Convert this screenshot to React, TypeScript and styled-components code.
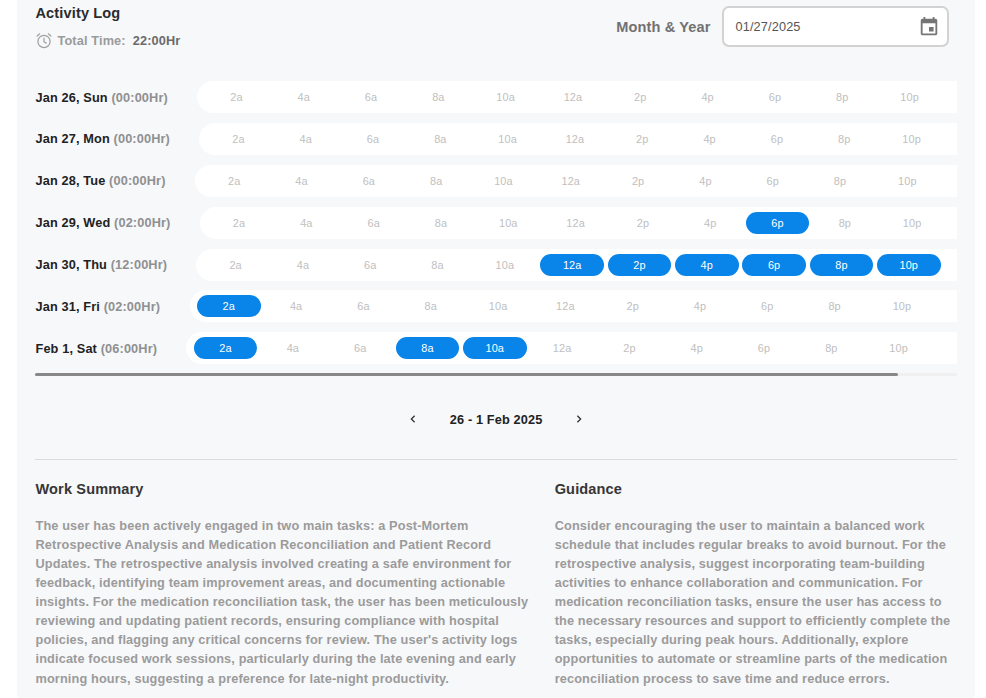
import React from "react";
import styled, { createGlobalStyle } from "styled-components";

const GlobalStyle = createGlobalStyle`
  *, *::before, *::after { box-sizing: border-box; }
  body {
    margin: 0;
    background: #fff;
    font-family: "Liberation Sans", Arial, Helvetica, sans-serif;
    letter-spacing: 0.135px;
  }
  h2, p { margin: 0; }
`;

const Panel = styled.main`
  width: 957.5px;
  height: 698px;
  margin-left: 17.3px;
  padding: 0 18px 0 18.2px;
  overflow: hidden;
  background: #f7f8fa;
`;

const Header = styled.header`
  display: flex;
  justify-content: space-between;
  height: 81px;
`;

const HeaderInfo = styled.div`
  display: flex;
  flex-direction: column;
  padding-top: 2px;
`;

const Heading = styled.h2<{ $color?: string }>`
  font-size: 14.56px;
  font-weight: 700;
  line-height: 22px;
  color: ${(p) => p.$color ?? "#2c2c2c"};
`;

const TotalTime = styled.div`
  display: flex;
  align-items: center;
  height: 20px;
  margin-top: 6px;
  font-size: 12.74px;
  font-weight: 700;
  color: #9a9b9c;
`;

const TotalLabel = styled.span`
  margin: 0 7px 0 4px;
`;

const TotalValue = styled.span`
  color: #6b6b6b;
`;

const DatePicker = styled.label`
  display: flex;
  align-items: center;
  gap: 11.4px;
  height: 41px;
  margin: 6px 7.8px 0 0;
  font-size: 14.56px;
  font-weight: 700;
  color: #717171;
`;

const DateField = styled.span`
  display: flex;
  align-items: center;
  justify-content: space-between;
  width: 227px;
  height: 41px;
  padding: 0 7.5px 0 11.5px;
  border: 2px solid #d2d2d2;
  border-radius: 7px;
  background: #fff;
  font-size: 12.74px;
  font-weight: 400;
  color: #555;
`;

const Days = styled.section`
  display: flex;
  flex-direction: column;
  gap: 9.9px;
`;

const DayRow = styled.div`
  display: flex;
  align-items: center;
  height: 32px;
`;

const DayLabel = styled.div<{ $width: number }>`
  flex: 0 0 ${(p) => p.$width}px;
  font-size: 12.74px;
  font-weight: 700;
  white-space: nowrap;
  color: #222;
`;

const Hours = styled.span`
  color: #8f9091;
`;

const Track = styled.div`
  display: flex;
  flex: 1;
  align-items: center;
  gap: 3.64px;
  height: 32px;
  padding-left: 7.3px;
  border-radius: 16px 0 0 16px;
  background: #fff;
`;

const Slot = styled.div<{ $active: boolean }>`
  flex: 0 0 63.7px;
  height: 22px;
  border-radius: 11px;
  line-height: 22px;
  font-size: 10.92px;
  text-align: center;
  background: ${(p) => (p.$active ? "#0984e8" : "transparent")};
  color: ${(p) => (p.$active ? "#fff" : "#c0c0c0")};
`;

const ScrollTrack = styled.div`
  height: 3px;
  margin-top: 8.4px;
  background: #f0f0f0;
`;

const ScrollThumb = styled.div`
  width: 862.4px;
  height: 3px;
  border-radius: 1.5px;
  background: #888;
`;

const Pager = styled.nav`
  display: flex;
  align-items: center;
  justify-content: center;
  gap: 32.5px;
  height: 84.4px;
  padding-top: 4px;
  border-bottom: 1px solid #dadcde;
  font-size: 12.74px;
  font-weight: 700;
  color: #222;
`;

const Columns = styled.div`
  display: grid;
  grid-template-columns: 519.2px 1fr;
  padding-top: 17.4px;
`;

const Paragraph = styled.p`
  margin-top: 16.2px;
  font-size: 12.74px;
  font-weight: 700;
  line-height: 19.11px;
  color: #9b9b9b;
  white-space: pre;
`;

const SLOTS = ["2a", "4a", "6a", "8a", "10a", "12a", "2p", "4p", "6p", "8p", "10p"];

const DAYS = [
  { day: "Jan 26, Sun", hours: "00:00", width: 161.8, active: [] as string[] },
  { day: "Jan 27, Mon", hours: "00:00", width: 163.8, active: [] },
  { day: "Jan 28, Tue", hours: "00:00", width: 159.6, active: [] },
  { day: "Jan 29, Wed", hours: "02:00", width: 164.4, active: ["6p"] },
  { day: "Jan 30, Thu", hours: "12:00", width: 161, active: ["12a", "2p", "4p", "6p", "8p", "10p"] },
  { day: "Jan 31, Fri", hours: "02:00", width: 154.2, active: ["2a"] },
  { day: "Feb 1, Sat", hours: "06:00", width: 150.9, active: ["2a", "8a", "10a"] },
];

const SUMMARY = [
  "The user has been actively engaged in two main tasks: a Post-Mortem",
  "Retrospective Analysis and Medication Reconciliation and Patient Record",
  "Updates. The retrospective analysis involved creating a safe environment for",
  "feedback, identifying team improvement areas, and documenting actionable",
  "insights. For the medication reconciliation task, the user has been meticulously",
  "reviewing and updating patient records, ensuring compliance with hospital",
  "policies, and flagging any critical concerns for review. The user's activity logs",
  "indicate focused work sessions, particularly during the late evening and early",
  "morning hours, suggesting a preference for late-night productivity.",
].join("\n");

const GUIDANCE = [
  "Consider encouraging the user to maintain a balanced work",
  "schedule that includes regular breaks to avoid burnout. For the",
  "retrospective analysis, suggest incorporating team-building",
  "activities to enhance collaboration and communication. For",
  "medication reconciliation tasks, ensure the user has access to",
  "the necessary resources and support to efficiently complete the",
  "tasks, especially during peak hours. Additionally, explore",
  "opportunities to automate or streamline parts of the medication",
  "reconciliation process to save time and reduce errors.",
].join("\n");

const AlarmIcon = () => (
  <svg width="18" height="18" viewBox="0 0 18 18" fill="none" stroke="#a0a0a0" strokeWidth="1.25" strokeLinecap="round">
    <circle cx="9" cy="10.4" r="6.1" />
    <path d="M9 7v3.7l2.2 1.4M2.1 5l2.6-2.2M15.9 5l-2.6-2.2" />
  </svg>
);

const CalendarIcon = () => (
  <svg width="22" height="22" viewBox="0 0 24 24" fill="#757575">
    <path d="M17 12h-5v5h5v-5zM16 1v2H8V1H6v2H5c-1.11 0-1.99.9-1.99 2L3 19c0 1.1.89 2 2 2h14c1.1 0 2-.9 2-2V5c0-1.1-.9-2-2-2h-1V1h-2zm3 18H5V8h14v11z" />
  </svg>
);

const Chevron = ({ d }: { d: string }) => (
  <svg width="8" height="10" viewBox="0 0 8 10" fill="none" stroke="#333" strokeWidth="1.3">
    <path d={d} />
  </svg>
);

export default function App() {
  return (
    <>
      <GlobalStyle />
      <Panel>
        <Header>
          <HeaderInfo>
            <Heading>Activity Log</Heading>
            <TotalTime>
              <AlarmIcon />
              <TotalLabel>Total Time:</TotalLabel>
              <TotalValue>22:00Hr</TotalValue>
            </TotalTime>
          </HeaderInfo>
          <DatePicker>
            Month &amp; Year
            <DateField>
              01/27/2025
              <CalendarIcon />
            </DateField>
          </DatePicker>
        </Header>
        <Days>
          {DAYS.map((d) => (
            <DayRow key={d.day}>
              <DayLabel $width={d.width}>
                {d.day} <Hours>({d.hours}Hr)</Hours>
              </DayLabel>
              <Track>
                {SLOTS.map((s) => (
                  <Slot key={s} $active={d.active.includes(s)}>
                    {s}
                  </Slot>
                ))}
              </Track>
            </DayRow>
          ))}
        </Days>
        <ScrollTrack>
          <ScrollThumb />
        </ScrollTrack>
        <Pager>
          <Chevron d="M5.6 1.8L2.4 5l3.2 3.2" />
          <span>26 - 1 Feb 2025</span>
          <Chevron d="M2.4 1.8L5.6 5 2.4 8.2" />
        </Pager>
        <Columns>
          <section>
            <Heading $color="#363636">Work Summary</Heading>
            <Paragraph>{SUMMARY}</Paragraph>
          </section>
          <section>
            <Heading $color="#363636">Guidance</Heading>
            <Paragraph>{GUIDANCE}</Paragraph>
          </section>
        </Columns>
      </Panel>
    </>
  );
}
